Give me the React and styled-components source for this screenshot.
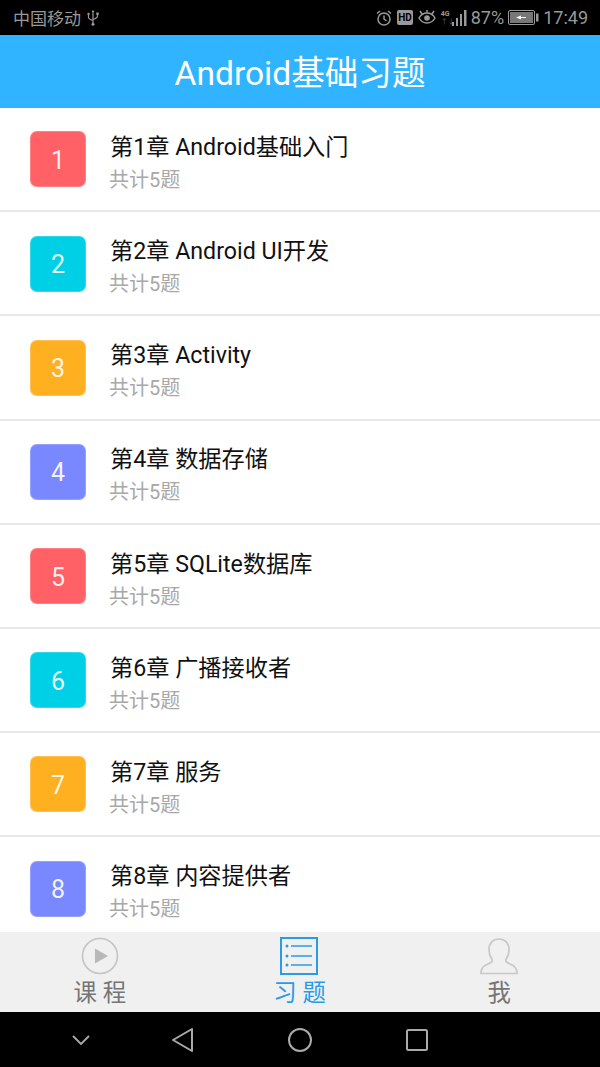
import React from "react";
import styled, { createGlobalStyle } from "styled-components";

const chapters = [
  { num: 1, title: "第1章 Android基础入门", color: "#ff6166" },
  { num: 2, title: "第2章 Android UI开发", color: "#00d0e6" },
  { num: 3, title: "第3章 Activity", color: "#ffb020" },
  { num: 4, title: "第4章 数据存储", color: "#7a88ff" },
  { num: 5, title: "第5章 SQLite数据库", color: "#ff6166" },
  { num: 6, title: "第6章 广播接收者", color: "#00d0e6" },
  { num: 7, title: "第7章 服务", color: "#ffb020" },
  { num: 8, title: "第8章 内容提供者", color: "#7a88ff" },
];

const App = () => {
  return (
    <Page>
      <GlobalStyle />
      <StatusBar>
        <StatusGroup>
          <Carrier>中国移动</Carrier>
          <svg width="14" height="18" viewBox="0 0 14 16" fill="none" stroke="#999" strokeWidth="1.2">
            <path d="M7 1v14M2.5 5v2.5C2.5 9 4 9.5 7 10.5M11.5 4v2C11.5 8 10 8.5 7 9.5" />
            <path d="M7 0l1.5 2h-3z" fill="#999" stroke="none" />
            <circle cx="2.5" cy="4" r="1.2" fill="#999" stroke="none" />
            <rect x="10.3" y="2.5" width="2.4" height="2.4" fill="#999" stroke="none" />
            <circle cx="7" cy="14.2" r="1.5" fill="#999" stroke="none" />
          </svg>
        </StatusGroup>
        <StatusGroup>
          <svg width="18" height="18" viewBox="0 0 18 18" fill="none" stroke="#999" strokeWidth="1.5">
            <circle cx="9" cy="10" r="6" />
            <path d="M9 6.5V10l2.5 2M2 4.5L5 2M16 4.5L13 2" />
          </svg>
          <HdBadge>HD</HdBadge>
          <svg width="20" height="16" viewBox="0 0 20 16" fill="none" stroke="#999" strokeWidth="1.5">
            <path d="M2 8c2-3.5 5-5 8-5s6 1.5 8 5c-2 3.5-5 5-8 5s-6-1.5-8-5z" />
            <circle cx="10" cy="8" r="2.8" fill="#999" stroke="none" />
            <path d="M3 1l2 3M10 0v2.5M17 1l-2 3" />
          </svg>
          <Signal>
            <SignalLabels>
              <span>4G</span>
              <SignalDim>↑↓</SignalDim>
            </SignalLabels>
            <svg width="15" height="16" viewBox="0 0 15 16" fill="#999">
              <rect x="0" y="12" width="2" height="4" />
              <rect x="4" y="8" width="2" height="8" />
              <rect x="8" y="4" width="2" height="12" />
              <rect x="12" y="0" width="2.5" height="16" />
            </svg>
          </Signal>
          <StatusText>87%</StatusText>
          <svg width="31" height="15" viewBox="0 0 31 15">
            <rect x="0.5" y="0.5" width="26" height="14" rx="1.5" fill="none" stroke="#999" />
            <rect x="2" y="2" width="23" height="11" fill="#777" />
            <path d="M8 7.5l5-2V7h5v1h-5v1.5z" fill="#fff" />
            <rect x="28" y="3.5" width="2.5" height="8" fill="#999" />
          </svg>
          <StatusText>17:49</StatusText>
        </StatusGroup>
      </StatusBar>
      <Header>Android基础习题</Header>
      <List>
        {chapters.map((c) => (
          <Row key={c.num}>
            <Badge $color={c.color}>{c.num}</Badge>
            <RowText>
              <Title>{c.title}</Title>
              <Sub>共计5题</Sub>
            </RowText>
          </Row>
        ))}
      </List>
      <TabBar>
        <Tab>
          <svg width="38" height="38" viewBox="0 0 38 38" fill="none">
            <circle cx="19" cy="19" r="17.5" stroke="#c4c4c4" strokeWidth="1.6" />
            <path d="M14 11.5L27 19l-13 7.5z" fill="#b8b8b8" />
          </svg>
          <TabLabel>课 程</TabLabel>
        </Tab>
        <Tab>
          <svg width="38" height="38" viewBox="0 0 38 38" fill="none" stroke="#2a9be6">
            <rect x="1" y="1" width="36" height="36" strokeWidth="2" />
            <path d="M11 9h21M11 19h21M11 28h21" strokeWidth="1.5" />
            <circle cx="7" cy="9" r="1.5" fill="#2a9be6" stroke="none" />
            <circle cx="7" cy="19" r="1.5" fill="#2a9be6" stroke="none" />
            <circle cx="7" cy="28" r="1.5" fill="#2a9be6" stroke="none" />
          </svg>
          <TabLabel $active>习 题</TabLabel>
        </Tab>
        <Tab>
          <svg width="38" height="38" viewBox="0 0 38 38" fill="none" stroke="#c8c8c8" strokeWidth="1.7">
            <path d="M1 36.5c0-6 3-8 8-10 3-1.2 4-2.5 2.5-5C9.5 18.5 9 15.5 9 12.5 9 6 13 2 19 2s10 4 10 10.5c0 3-.5 6-2.5 9-1.5 2.5-.5 3.8 2.5 5 5 2 8 4 8 10z" />
          </svg>
          <TabLabel>我</TabLabel>
        </Tab>
      </TabBar>
      <NavBar>
        <svg width="20" height="14" viewBox="0 0 20 14" fill="none" stroke="#aaa" strokeWidth="1.8">
          <path d="M2 3l8 8 8-8" />
        </svg>
        <svg width="24" height="26" viewBox="0 0 24 26" fill="none" stroke="#aaa" strokeWidth="2" strokeLinejoin="round">
          <path d="M21 2v22L2 13z" />
        </svg>
        <svg width="26" height="26" viewBox="0 0 26 26" fill="none" stroke="#aaa" strokeWidth="2">
          <circle cx="13" cy="13" r="11" />
        </svg>
        <svg width="24" height="24" viewBox="0 0 24 24" fill="none" stroke="#aaa" strokeWidth="2">
          <rect x="2" y="2" width="20" height="20" rx="1.5" />
        </svg>
      </NavBar>
    </Page>
  );
};

export default App;

const GlobalStyle = createGlobalStyle`
  html, body {
    margin: 0;
    padding: 0;
    background: #fff;
  }
`;
const Page = styled.div`
  width: 600px;
  height: 1067px;
  display: flex;
  flex-direction: column;
  overflow: hidden;
  font-family: Roboto, "Noto Sans CJK SC", sans-serif;
`;
const StatusBar = styled.div`
  height: 35px;
  flex-shrink: 0;
  background: #000;
  display: flex;
  align-items: center;
  justify-content: space-between;
  padding: 0 12px 0 13px;
  color: #999;
`;
const StatusGroup = styled.div`
  display: flex;
  align-items: center;
  gap: 4px;
`;
const Carrier = styled.span`
  font-size: 17px;
  margin-right: 1px;
`;
const HdBadge = styled.span`
  background: #999;
  color: #000;
  font-size: 10px;
  font-weight: 700;
  padding: 2px 1px;
  border-radius: 2px;
`;
const Signal = styled.div`
  display: flex;
  align-items: center;
  gap: 1px;
`;
const SignalLabels = styled.div`
  display: flex;
  flex-direction: column;
  width: 10px;
  font-size: 7px;
  line-height: 8px;
  font-weight: 700;
`;
const SignalDim = styled.span`
  color: #444;
`;
const StatusText = styled.span`
  font-size: 18px;
`;
const Header = styled.div`
  height: 73px;
  padding-bottom: 2px;
  box-sizing: border-box;
  flex-shrink: 0;
  background: #30b4ff;
  color: #fff;
  font-size: 33.6px;
  display: flex;
  align-items: center;
  justify-content: center;
`;
const List = styled.div`
  flex: 1;
  min-height: 0;
  overflow: hidden;
  background: #fff;
`;
const Row = styled.div`
  height: 101.7px;
  padding: 0.5px 0 0 30px;
  display: flex;
  align-items: center;
  gap: 24px;
  border-bottom: 2px solid #e8e8e8;
`;
const Badge = styled.div`
  width: 56px;
  height: 56px;
  box-sizing: border-box;
  padding-top: 2px;
  border-radius: 7px;
  background: ${(p) => p.$color};
  box-shadow: inset 0 0 0 1px rgba(255, 255, 255, 0.2);
  color: rgba(255, 255, 255, 0.92);
  font-size: 25px;
  display: flex;
  align-items: center;
  justify-content: center;
`;
const RowText = styled.div`
  display: flex;
  flex-direction: column;
  gap: 6px;
  padding-top: 5px;
`;
const Title = styled.div`
  font-size: 23.2px;
  line-height: 30px;
  color: #111;
`;
const Sub = styled.div`
  font-size: 20px;
  line-height: 24px;
  margin-left: -1px;
  color: #a8a8a8;
`;
const TabBar = styled.div`
  height: 80px;
  flex-shrink: 0;
  background: #f0f0f0;
  display: grid;
  grid-template-columns: repeat(3, 1fr);
  padding-right: 1px;
`;
const Tab = styled.div`
  display: flex;
  flex-direction: column;
  align-items: center;
  padding-top: 5px;
`;
const TabLabel = styled.span`
  font-size: 23.4px;
  line-height: 30px;
  margin-top: 3px;
  color: ${(p) => (p.$active ? "#2a9be6" : "#757575")};
`;
const NavBar = styled.div`
  height: 55px;
  flex-shrink: 0;
  background: #000;
  display: grid;
  grid-template-columns: 72px 132px 102px 132px;
  align-items: center;
  justify-items: center;
  padding-left: 45px;
`;
